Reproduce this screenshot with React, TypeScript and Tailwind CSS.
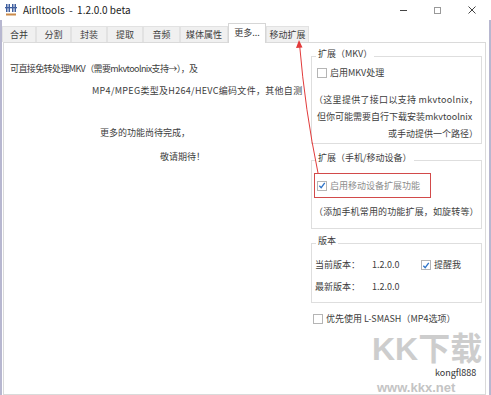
import type { ReactNode } from 'react';

const TABS = [
  { label: '合并', w: 'w-[34px]' },
  { label: '分割', w: 'w-[35px]' },
  { label: '封装', w: 'w-[36px]' },
  { label: '提取', w: 'w-[36px]' },
  { label: '音频', w: 'w-[37px]' },
  { label: '媒体属性', w: 'w-[48px]' },
  { label: '更多...', w: 'w-[38px]', active: true },
  { label: '移动扩展', w: 'w-[43px]' },
];

function CheckBox({ checked = false }: { checked?: boolean }) {
  return (
    <span className="w-[10px] h-[10px] border border-[#b5b5b5] bg-white shrink-0 flex items-center justify-center">
      {checked && (
        <svg width="9" height="9" viewBox="0 0 9 9">
          <path d="M1.5 4.8 L3.6 7 L7.6 1.6" fill="none" stroke="#2f74c9" strokeWidth="1.5" />
        </svg>
      )}
    </span>
  );
}

function Group({ title, className = '', children }: { title: string; className?: string; children: ReactNode }) {
  return (
    <fieldset className={`border border-[#dedede] pl-[4px] ${className}`}>
      <legend className="px-[2px] pb-[4px] leading-[12px]">{title}</legend>
      {children}
    </fieldset>
  );
}

export default function App() {
  return (
    <div className="w-[491px] h-[395px] relative overflow-hidden bg-white text-[9px] leading-[12px] text-[#3d3d3d] font-['Noto_Sans_CJK_SC','Noto_Sans',sans-serif] flex flex-col">
      {/* 标题栏 */}
      <div className="h-[20px] flex items-center shrink-0">
        <svg className="ml-[5px]" width="12" height="14" viewBox="0 0 12 14">
          <rect x="1" y="1" width="1.5" height="8" fill="#3f5f9f" />
          <rect x="3.5" y="1" width="1.5" height="8" fill="#3f5f9f" />
          <rect x="7" y="1" width="1.5" height="8" fill="#3f5f9f" />
          <rect x="9.5" y="1" width="1.5" height="8" fill="#3f5f9f" />
          <rect x="0" y="4" width="12" height="1.3" fill="#3f5f9f" />
          <rect x="1" y="10.5" width="10" height="2" fill="#c98a4a" />
        </svg>
        <span className="ml-[6px] text-[10px] text-[#222]">Airlltools&nbsp; - &nbsp;1.2.0.0 beta</span>
        <div className="ml-auto flex items-center text-[#333]">
          <span className="w-[7px] h-px bg-[#444] mr-[27px]" />
          <span className="w-[7px] h-[7px] border border-[#999] mr-[27px]" />
          <svg className="mr-[15px]" width="8" height="8" viewBox="0 0 8 8">
            <path d="M0.5 0.5 L7.5 7.5 M7.5 0.5 L0.5 7.5" stroke="#444" strokeWidth="1" />
          </svg>
        </div>
      </div>

      {/* 主体 */}
      <div className="flex-1 flex flex-col border-l-2 border-r-2 border-[#b7b7d0]">
        <div className="h-[22px] flex items-end shrink-0">
          {TABS.map(t => (
            <div
              key={t.label}
              className={`${t.w} flex items-center justify-center border border-b-0 ${
                t.active
                  ? 'h-[20px] bg-white border-[#d6d6d6] relative z-10 -mb-px pb-[2px]'
                  : 'h-[16px] bg-[#f0f0f0] border-[#e2e2e2]'
              }`}
            >
              {t.label}
            </div>
          ))}
        </div>

        <div className="flex-1 ml-[1px] mr-[3px] border border-[#dadada] bg-white flex">
          {/* 左侧说明 */}
          <div className="w-[307px] pt-[20px] flex flex-col">
            <p className="pl-[6px] tracking-[-0.6px]">可直接免转处理MKV（需要mkvtoolnix支持→），及</p>
            <p className="pl-[88px] mt-[10px] tracking-[0.3px] whitespace-nowrap">MP4/MPEG类型及H264/HEVC编码文件，其他自测</p>
            <p className="pl-[96px] mt-[30px]">更多的功能尚待完成，</p>
            <p className="pl-[156px] mt-[12px]">敬请期待！</p>
          </div>

          {/* 右侧选项 */}
          <div className="w-[171px] pt-[5px] flex flex-col">
            <Group title="扩展（MKV）" className="pb-[3px]">
              <div className="mt-[3px] flex items-center gap-[3px] pl-[1px]">
                <CheckBox />
                <span>启用MKV处理</span>
              </div>
              <p className="mt-[15px] -ml-[2px] tracking-[0.3px]">（这里提供了接口以支持 mkvtoolnix，</p>
              <p className="mt-[5px] ml-[1px]">但你可能需要自行下载安装mkvtoolnix</p>
              <p className="mt-[5px] pr-[3px] text-right">或手动提供一个路径）</p>
            </Group>

            <Group title="扩展（手机/移动设备）" className="mt-[8px] pb-[10px]">
              <div className="mt-[5px] -ml-[2px] w-[117px] h-[25px] border border-[#d24a4a] flex items-center gap-[3px] pl-[2px]">
                <CheckBox checked />
                <span className="text-[#8c8c8c]">启用移动设备扩展功能</span>
              </div>
              <p className="mt-[8px] -ml-[2px] tracking-[0.15px]">（添加手机常用的功能扩展，如旋转等）</p>
            </Group>

            <Group title="版本" className="mt-[6px] pb-[9px]">
              <div className="mt-[8px] flex items-center -ml-[1px]">
                <span className="w-[57px]">当前版本：</span>
                <span className="w-[49px]">1.2.0.0</span>
                <CheckBox checked />
                <span className="ml-[3px]">提醒我</span>
              </div>
              <div className="mt-[10px] flex items-center -ml-[1px]">
                <span className="w-[57px]">最新版本：</span>
                <span>1.2.0.0</span>
              </div>
            </Group>

            <div className="mt-[10px] flex items-center gap-[3px] ml-[2px]">
              <CheckBox />
              <span>优先使用 L-SMASH（MP4选项）</span>
            </div>
          </div>
        </div>
      </div>

      {/* 水印 */}
      <span className="absolute left-[372px] top-[334px] text-[32px] leading-[30px] font-bold text-[#cdcdcd] font-['Liberation_Sans','Noto_Sans_CJK_SC',sans-serif] pointer-events-none">KK下载</span>
      <span className="absolute left-[435px] top-[368px] text-[9px] leading-[10px] text-[#333]">kongfl888</span>
      <span className="absolute left-[377px] top-[380px] text-[13px] leading-[16px] font-bold text-[#c4c4c4] font-['Liberation_Sans',sans-serif]">www.kkx.net</span>

      {/* 标注箭头 */}
      <svg className="absolute inset-0 pointer-events-none" width="491" height="395" viewBox="0 0 491 395">
        <path d="M318 173 Q305 110 299.5 44" fill="none" stroke="#e23b3b" strokeWidth="1" />
        <path d="M299 40 L296 48 L302.5 47.5 Z" fill="#e23b3b" />
      </svg>
    </div>
  );
}
